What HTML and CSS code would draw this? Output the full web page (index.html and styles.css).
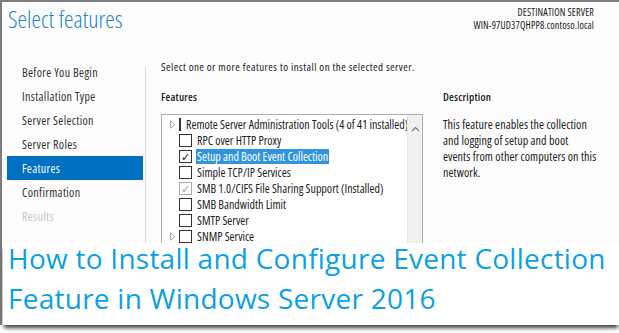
FILE: index.html
```html
<!DOCTYPE html>
<html lang="en">
<head>
  <meta charset="UTF-8">
  <title>Select features</title>
  <link rel="stylesheet" href="styles.css">
</head>
<body>
  <div class="shot">
    <div class="window">
      <header class="top">
        <h1 class="title">Select features</h1>
        <div class="dest">
          <div>DESTINATION SERVER</div>
          <div>WIN-97UD37QHPP8.contoso.local</div>
        </div>
      </header>

      <div class="wizard">
        <ul class="steps">
          <li>Before You Begin</li>
          <li>Installation Type</li>
          <li>Server Selection</li>
          <li>Server Roles</li>
          <li class="active">Features</li>
          <li>Confirmation</li>
          <li class="off">Results</li>
        </ul>
        <div class="sep"></div>

        <div class="main">
          <p class="intro">Select one or more features to install on the selected server.</p>
          <div class="cols">
            <div class="feat">
              <h3>Features</h3>
              <div class="listbox">
                <div class="rows">
                  <div class="row first">
                    <svg class="exp" width="6" height="9" viewBox="0 0 6 9"><path d="M0.5 0.8 L4.8 4.5 L0.5 8.2 Z" fill="none" stroke="#a6a6a6"/></svg>
                    <span class="cb part"></span><span class="lbl">Remote Server Administration Tools (4 of 41 installed)</span>
                  </div>
                  <div class="row"><span class="exp"></span><span class="cb"></span><span class="lbl">RPC over HTTP Proxy</span></div>
                  <div class="row"><span class="exp"></span><span class="cb on">&#10003;</span><span class="lbl sel">Setup and Boot Event Collection</span></div>
                  <div class="row"><span class="exp"></span><span class="cb"></span><span class="lbl">Simple TCP/IP Services</span></div>
                  <div class="row"><span class="exp"></span><span class="cb on dim">&#10003;</span><span class="lbl">SMB 1.0/CIFS File Sharing Support (Installed)</span></div>
                  <div class="row"><span class="exp"></span><span class="cb"></span><span class="lbl">SMB Bandwidth Limit</span></div>
                  <div class="row"><span class="exp"></span><span class="cb"></span><span class="lbl">SMTP Server</span></div>
                  <div class="row">
                    <svg class="exp" width="6" height="9" viewBox="0 0 6 9"><path d="M0.5 0.8 L4.8 4.5 L0.5 8.2 Z" fill="none" stroke="#a6a6a6"/></svg>
                    <span class="cb"></span><span class="lbl">SNMP Service</span>
                  </div>
                </div>
                <div class="scroll">
                  <svg class="up" width="9" height="6" viewBox="0 0 9 6"><path d="M1 5 L4.5 1.5 L8 5" fill="none" stroke="#7a7a7a" stroke-width="1.2"/></svg>
                </div>
              </div>
            </div>
            <div class="desc">
              <h3>Description</h3>
              <p>This feature enables the collection<br>and logging of setup and boot<br>events from other computers on this<br>network.</p>
            </div>
          </div>
        </div>
      </div>
    </div>

    <div class="caption">
      <p>How to Install and Configure Event Collection<br>Feature in Windows Server 2016</p>
    </div>
  </div>
</body>
</html>
```

FILE: styles.css
```css
body {
  margin: 0;
  background: #ffffff;
  font-family: "Open Sans", "Liberation Sans", sans-serif;
  font-stretch: 75%;
  color: #222;
}
.shot {
  position: relative;
  width: 619px;
  height: 333px;
  overflow: hidden;
}
.window {
  height: 323px;
  border-top: 2px solid #7c7c7c;
  border-left: 2px solid #7c7c7c;
  background: #fcfcfc;
  overflow: hidden;
}
.top {
  display: flex;
  justify-content: space-between;
  height: 58px;
}
.title {
  margin: 3px 0 0 6px;
  font-size: 24px;
  line-height: 28px;
  font-weight: 300;
  color: #2a83c2;
}
.dest {
  margin: 4px 25px 0 0;
  text-align: right;
  font-size: 10px;
  line-height: 13px;
  letter-spacing: 0.15px;
  color: #1a1a1a;
}

.wizard {
  display: flex;
  height: 300px;
}
.steps {
  list-style: none;
  margin: 0 0 0 5px;
  padding: 0;
  width: 136px;
}
.steps li {
  height: 24px;
  line-height: 26px;
  padding-left: 15px;
  font-size: 12px;
  letter-spacing: 0.35px;
  color: #333;
}
.steps li.active {
  background: #0070c0;
  color: #fff;
}
.steps li.off { color: #c6c6c6; }
.sep {
  width: 1px;
  margin: 7px 0 0 2px;
  background: #d9d9d9;
}

.main {
  padding-left: 15px;
}
.intro {
  margin: -1px 0 0;
  font-size: 11px;
  line-height: 16px;
  letter-spacing: 0.45px;
}
.cols {
  display: flex;
  gap: 20px;
  margin-top: 14px;
}
h3 {
  margin: 0 0 9px;
  font-size: 11px;
  line-height: 16px;
  font-weight: 600;
  letter-spacing: 0.2px;
}
.feat { width: 262px; }
.listbox {
  display: flex;
  height: 160px;
  border: 1px solid #abadb3;
  background: #fff;
}
.rows {
  flex: 1;
  padding-left: 8px;
  overflow: hidden;
}
.row {
  display: flex;
  align-items: center;
  height: 16px;
  font-size: 12px;
  white-space: nowrap;
}
.row.first { margin-top: 1px; }
.exp {
  flex: none;
  width: 6px;
  margin-right: 3px;
}
.cb {
  box-sizing: border-box;
  width: 13px;
  height: 13px;
  border: 1px solid #333;
  background: #fff;
  margin-right: 4px;
  font-size: 11px;
  line-height: 11px;
  text-align: center;
  color: #111;
}
.cb.part {
  box-shadow: inset 0 0 0 2px #fff, inset 0 0 0 6px #111;
}
.cb.dim {
  border-color: #aaa;
  color: #999;
}
.lbl {
  padding: 0 1px;
  line-height: 15px;
}
.lbl.sel {
  background: #3094e0;
  color: #fff;
}
.scroll {
  width: 14px;
  background: #f0f0f0;
  border-left: 1px solid #e6e6e6;
  text-align: center;
}
.up { margin-top: 6px; }

.desc { width: 170px; }
.desc p {
  margin: 12px 0 0;
  font-size: 12px;
  line-height: 16px;
  letter-spacing: 0.1px;
  white-space: nowrap;
}
.desc h3 { margin-bottom: 0; }

.caption {
  position: absolute;
  left: 3px;
  right: 0;
  top: 243px;
  height: 82px;
  padding-left: 5px;
  background: #fff;
  box-shadow: 0 4px 4px -1px rgba(0, 0, 0, 0.75);
}
.caption p {
  margin: -5px 0 0;
  font-size: 28px;
  line-height: 40px;
  font-stretch: 100%;
  letter-spacing: 0.25px;
  color: #0ca0e4;
}
```
